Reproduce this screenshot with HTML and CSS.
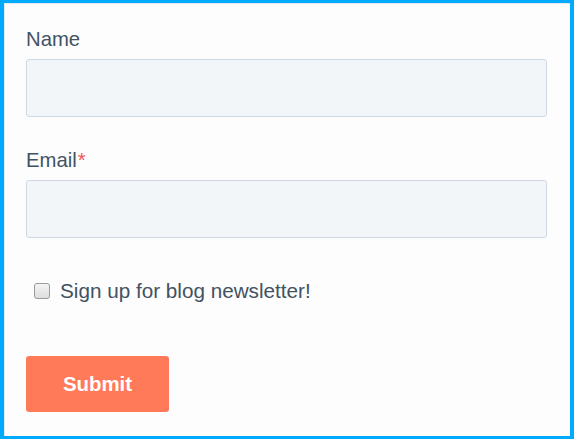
FILE: index.html
```html
<!DOCTYPE html>
<html lang="en">
<head>
  <meta charset="UTF-8" />
  <meta name="viewport" content="width=device-width, initial-scale=1.0"/>
  <title>Newsletter form</title>
  <link rel="stylesheet" href="styles.css">
</head>
<body>
  <form class="frame">
    <div class="field">
      <label for="name">Name</label>
      <input type="text" id="name" />
    </div>

    <div class="field">
      <label for="email">Email<span class="req">*</span></label>
      <input type="email" id="email" />
    </div>

    <label class="check">
      <input type="checkbox" />
      <span>Sign up for blog newsletter!</span>
    </label>

    <button type="button">Submit</button>
  </form>
</body>
</html>
```

FILE: styles.css
```css
html, body {
  margin: 0;
  height: 100%;
}
body {
  font-family: "Liberation Sans", Arial, sans-serif;
  color: #425262;
}
.frame {
  box-sizing: border-box;
  height: 439px;
  border: solid #00aaff;
  border-width: 3px 4px 3px 4px;
  background: #fdfdfd;
  box-shadow: inset 1px 1px 0 #e6e9ec;
  padding: 24px 23px 0 22px;
  margin: 0;
}
.field {
  margin-bottom: 31px;
}
.field label {
  display: block;
  font-size: 20.3px;
  line-height: 24px;
  margin-bottom: 8px;
}
.req {
  color: #f2545b;
  margin-left: 1px;
}
.field input {
  display: block;
  box-sizing: border-box;
  width: 100%;
  height: 58px;
  background: #f3f6f9;
  border: 1px solid #cfd8e3;
  border-radius: 3px;
  margin: 0;
}
.field + .field {
  margin-bottom: 41px;
}
.check {
  display: flex;
  align-items: center;
  gap: 10px;
  padding-left: 8px;
  font-size: 20.7px;
  line-height: 24px;
  margin-bottom: 53px;
}
.check input {
  appearance: none;
  -webkit-appearance: none;
  width: 16px;
  height: 16px;
  margin: 0;
  border: 1px solid #9a9a9a;
  border-radius: 3px;
  background: linear-gradient(#f4f4f4, #dedede);
}
button {
  display: block;
  width: 143px;
  height: 56px;
  background: #ff7a59;
  color: #fff;
  border: none;
  border-radius: 3px;
  font-family: "Liberation Sans", Arial, sans-serif;
  font-size: 20.4px;
  font-weight: bold;
  cursor: pointer;
}
```
